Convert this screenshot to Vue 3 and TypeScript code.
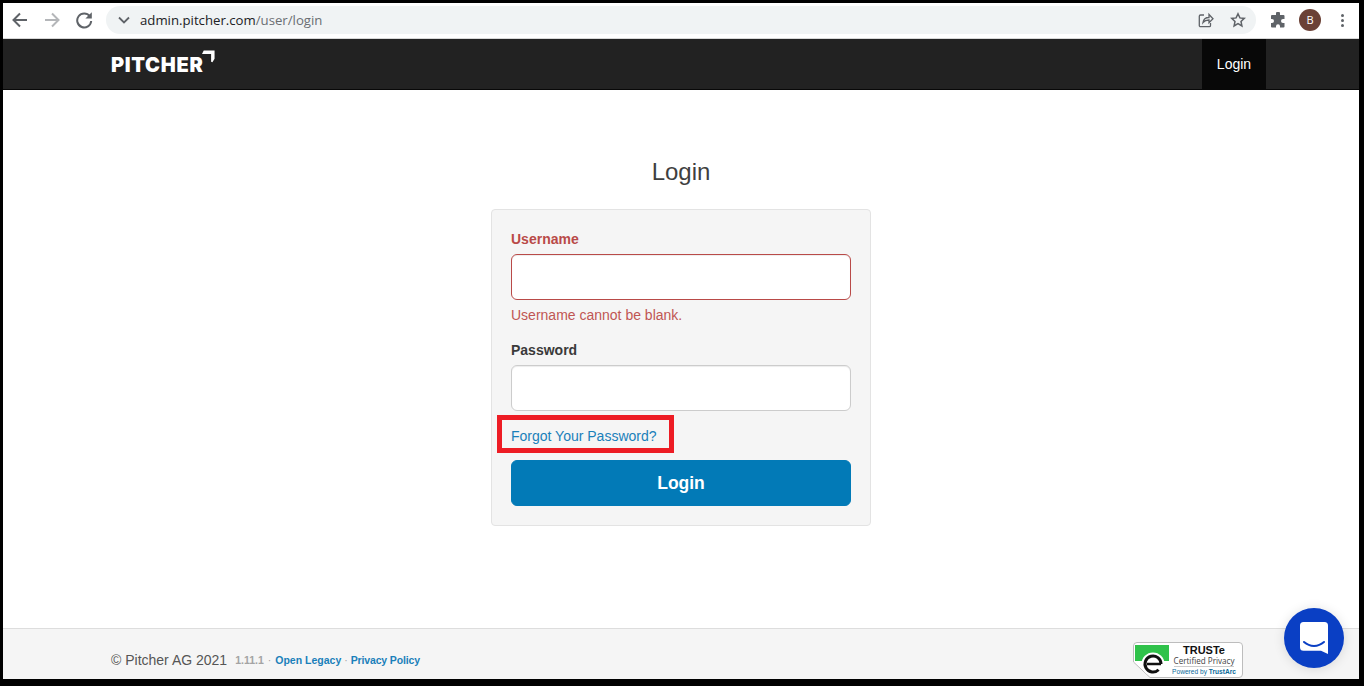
<script setup lang="ts">
const username = ''
const password = ''
</script>

<template>
  <div class="frame">
    <div class="window">
      <header class="toolbar">
        <button class="tool">
          <svg width="18" height="18" viewBox="0 0 18 18" fill="none" stroke="#5f6368" stroke-width="2"><path d="M16 9H3M9 2.500 2.500 9 9 15.500" /></svg>
        </button>
        <button class="tool">
          <svg width="18" height="18" viewBox="0 0 18 18" fill="none" stroke="#b4b6b9" stroke-width="2"><path d="M2 9h13M9 2.500 15.500 9 9 15.500" /></svg>
        </button>
        <button class="tool">
          <svg width="18" height="18" viewBox="0 0 18 18" fill="none"><path d="M14.800 5.200A7 7 0 1 0 16.200 10" stroke="#5f6368" stroke-width="2" /><path d="M16.800 1.200v6.400h-6.400z" fill="#5f6368" /></svg>
        </button>
        <div class="omnibox">
          <svg class="chev" width="12" height="8" viewBox="0 0 12 8" fill="none" stroke="#5f6368" stroke-width="1.800"><path d="M1 1.500 6 6.500l5-5" /></svg>
          <span class="url">admin.pitcher.com<span class="url-path">/user/login</span></span>
          <svg class="omni-icon share" width="16" height="16" viewBox="0 0 16 16" fill="none" stroke="#5f6368" stroke-width="1.300"><path d="M6 3H2.500A1.200 1.200 0 0 0 1.300 4.200v9.300a1.200 1.200 0 0 0 1.200 1.200h8.800a1.200 1.200 0 0 0 1.200-1.200V11" /><path d="M5 10.500c.5-3.500 3-5 6-5V2.500l4 4.300-4 4V8c-2.500 0-4.500.7-6 2.500z" /></svg>
          <svg class="omni-icon star" width="16" height="16" viewBox="0 0 16 16" fill="none" stroke="#5f6368" stroke-width="1.500"><path d="M8 1.800l1.900 4.100 4.400.5-3.300 3 .9 4.500L8 11.600l-3.900 2.300.9-4.500-3.300-3 4.400-.5z" /></svg>
        </div>
        <svg class="puzzle" width="16" height="16" viewBox="0 0 16 16" fill="#5f6368"><path d="M6 1.500a2 2 0 0 1 4 0V3h3.500a1 1 0 0 1 1 1v3H13a2 2 0 0 0 0 4h1.500v3.500a1 1 0 0 1-1 1H10v-1.300a2 2 0 0 0-4 0v1.300H2a1 1 0 0 1-1-1V11h1a2 2 0 0 0 0-4H1V4a1 1 0 0 1 1-1h4z" /></svg>
        <div class="avatar">B</div>
        <div class="dots"><i></i><i></i><i></i></div>
      </header>

      <nav class="navbar">
        <a class="brand">
          <span class="brand-text">PITCHER</span>
          <svg class="brand-mark" width="13" height="13" viewBox="0 0 15 14" fill="#fff"><path d="M2 0h12.500v9.500L12 13.500l-1.500-.5V4H0z" /></svg>
        </a>
        <a class="nav-login">Login</a>
      </nav>

      <main class="main">
        <h1 class="title">Login</h1>
        <form class="panel" @submit.prevent>
          <label class="label label-error">Username</label>
          <input class="field field-error" type="text" :value="username" />
          <p class="error">Username cannot be blank.</p>
          <label class="label label-password">Password</label>
          <input class="field" type="password" :value="password" />
          <div class="forgot-row">
            <a class="forgot">Forgot Your Password?</a>
            <span class="highlight"></span>
          </div>
          <button class="submit" type="submit">Login</button>
        </form>
      </main>

      <footer class="footer">
        <span class="copyright">© Pitcher AG 2021</span>
        <span class="meta">1.11.1<span class="sep">·</span><a>Open Legacy</a><span class="sep sep-tight">·</span><a class="tight">Privacy Policy</a></span>
        <div class="truste">
          <svg class="truste-shape" width="110" height="36" viewBox="0 0 110 36"><path d="M4 .5H106a3.500 3.500 0 0 1 3.500 3.500V32a3.500 3.500 0 0 1-3.500 3.500H17L.5 20V4A3.500 3.500 0 0 1 4 .5z" fill="#fff" stroke="#bdbdbd" /></svg>
          <div class="truste-mark">
            <span class="truste-green"></span>
            <svg class="truste-e" width="24" height="24" viewBox="0 0 24 24" fill="none"><circle cx="12" cy="12" r="11.500" fill="#fff" /><path d="M20 12H6" stroke="#111" stroke-width="2.500" /><path d="M20 12a8 8 0 1 0-2.400 5.700" stroke="#111" stroke-width="3" /></svg>
          </div>
          <div class="truste-copy">
            <b>TRUSTe</b>
            <span class="truste-cert">Certified Privacy</span>
            <span class="truste-power">Powered by <b>TrustArc</b></span>
          </div>
        </div>
      </footer>

      <button class="chat" aria-label="Chat">
        <svg width="28" height="32" viewBox="0 0 28 32"><path d="M3.500 0h21A3.500 3.500 0 0 1 28 3.500V32l-7-3.300H3.500A3.500 3.500 0 0 1 0 25.200V3.500A3.500 3.500 0 0 1 3.500 0z" fill="#fff" /><path d="M4 20c6 5.200 14 5.200 20 0" fill="none" stroke="#0a3fc4" stroke-width="2" stroke-linecap="round" /></svg>
      </button>
    </div>
  </div>
</template>

<style scoped>
.frame {
  width: 1364px;
  height: 686px;
  box-sizing: border-box;
  padding: 3px 5px 7px 3px;
  background: #000;
  font-family: "Liberation Sans", Arial, sans-serif;
  color: #333;
  overflow: hidden;
}
.window {
  position: relative;
  height: 100%;
  display: flex;
  flex-direction: column;
  background: #fff;
}
.toolbar {
  height: 34px;
  flex: none;
  display: flex;
  align-items: center;
  padding-left: 1px;
  padding-bottom: 1px;
  background: #fff;
  border-bottom: 1px solid #d8d8d8;
}
.tool {
  width: 32px;
  height: 32px;
  padding: 0;
  border: 0;
  background: none;
  display: flex;
  align-items: center;
  justify-content: center;
}
.omnibox {
  width: 1150px;
  height: 28px;
  margin-left: 6px;
  border-radius: 14px;
  background: #f0f3f4;
  display: flex;
  align-items: center;
  box-sizing: border-box;
  padding-left: 12px;
}
.url {
  margin-left: 10px;
  font-family: "Open Sans", sans-serif;
  font-size: 13.200px;
  color: #202124;
  white-space: nowrap;
}
.url-path { color: #6a6e72; }
.omni-icon.share { margin-left: auto; }
.omni-icon.star { margin-left: 16px; margin-right: 10px; }
.puzzle { margin-left: 14px; }
.avatar {
  width: 22px;
  height: 22px;
  margin-left: 13px;
  border-radius: 50%;
  background: #6b4136;
  color: #fff;
  font-family: "Open Sans", sans-serif;
  font-size: 11px;
  line-height: 22px;
  text-align: center;
}
.dots {
  margin-left: 20px;
  display: flex;
  flex-direction: column;
  gap: 2px;
}
.dots i {
  width: 3px;
  height: 3px;
  border-radius: 50%;
  background: #5f6368;
}
.navbar {
  height: 50px;
  flex: none;
  display: flex;
  align-items: stretch;
  padding-left: 108px;
  padding-right: 93px;
  background: #222;
  border-bottom: 1px solid #080808;
}
.brand {
  display: flex;
  align-items: flex-start;
  position: relative;
  width: 104px;
}
.brand-text {
  margin-top: 12px;
  font-family: Inter, sans-serif;
  font-weight: 900;
  font-size: 20px;
  line-height: 28px;
  letter-spacing: .7px;
  color: #fff;
}
.brand-mark {
  position: absolute;
  left: 91px;
  top: 11px;
}
.nav-login {
  margin-left: auto;
  width: 64px;
  background: #080808;
  color: #fff;
  font-size: 14px;
  line-height: 50px;
  text-align: center;
}
.main {
  flex: 1;
  display: flex;
  flex-direction: column;
  align-items: center;
  min-height: 0;
}
.title {
  margin: 66px 0 22px;
  font-size: 24px;
  font-weight: 400;
  line-height: 31px;
  color: #3f3f3f;
}
.panel {
  width: 380px;
  height: 317px;
  box-sizing: border-box;
  padding: 19px;
  display: flex;
  flex-direction: column;
  background: #f5f5f5;
  border: 1px solid #e3e3e3;
  border-radius: 4px;
}
.label {
  font-size: 14px;
  font-weight: 700;
  line-height: 20px;
  margin-bottom: 5px;
  color: #3a3a3a;
}
.label-error { color: #b94a48; }
.label-password { margin-top: 15px; }
.field {
  height: 46px;
  flex: none;
  box-sizing: border-box;
  width: 100%;
  border: 1px solid #ccc;
  border-radius: 6px;
  background: #fff;
  outline: none;
  box-shadow: inset 0 1px 1px rgba(0, 0, 0, .075);
}
.field-error { border-color: #b94a48; }
.error {
  margin: 5px 0 0;
  font-size: 14px;
  line-height: 20px;
  color: #c05553;
}
.forgot-row {
  position: relative;
  margin-top: 15px;
  height: 20px;
}
.forgot {
  font-size: 14px;
  line-height: 20px;
  color: #1a80ba;
}
.highlight {
  position: absolute;
  left: -14px;
  top: -11px;
  width: 177px;
  height: 38px;
  box-sizing: border-box;
  border: 5px solid #ed1c24;
}
.submit {
  margin-top: 14px;
  height: 46px;
  flex: none;
  padding: 0;
  border: 1px solid #027ab7;
  border-radius: 6px;
  background: #027ab7;
  color: #fff;
  font-family: inherit;
  font-size: 17.500px;
  font-weight: 700;
}
.footer {
  height: 51px;
  flex: none;
  box-sizing: border-box;
  position: relative;
  display: flex;
  align-items: flex-start;
  padding: 22px 116px 0 108px;
  background: #f5f5f5;
  border-top: 1px solid #ddd;
}
.copyright {
  font-size: 14px;
  line-height: 18px;
  color: #555;
}
.meta {
  margin-left: 8px;
  margin-top: 2px;
  font-size: 10.500px;
  font-weight: 700;
  line-height: 15px;
  color: #a3a3a3;
  white-space: pre;
}
.meta a { color: #1a80ba; }
.meta a.tight { letter-spacing: -.15px; }
.sep {
  margin: 0 4px;
  font-weight: 400;
}
.sep-tight { margin: 0 3px; }
.truste {
  position: relative;
  margin-left: auto;
  margin-top: -9px;
  width: 110px;
  height: 36px;
  display: flex;
}
.truste-shape {
  position: absolute;
  left: 0;
  top: 0;
}
.truste-mark {
  position: relative;
  width: 39px;
  flex: none;
}
.truste-green {
  position: absolute;
  left: 2px;
  top: 3px;
  width: 34px;
  height: 16px;
  background: #2fc24a;
}
.truste-e {
  position: absolute;
  left: 8px;
  top: 10px;
}
.truste-copy {
  position: relative;
  width: 64px;
  padding-top: 2px;
  display: flex;
  flex-direction: column;
  align-items: center;
}
.truste-copy > b {
  font-size: 11px;
  line-height: 12px;
  color: #111;
}
.truste-cert {
  margin-top: -1px;
  font-family: "Open Sans", sans-serif;
  font-size: 8.100px;
  line-height: 11px;
  color: #444;
  white-space: nowrap;
  border-bottom: 1px solid #ccc;
}
.truste-power {
  font-size: 6.600px;
  line-height: 10px;
  color: #0b6a9a;
  white-space: nowrap;
}
.chat {
  position: absolute;
  left: 1281px;
  top: 605px;
  width: 60px;
  height: 60px;
  padding: 0;
  border: 0;
  border-radius: 50%;
  background: #0a3fc4;
  display: flex;
  align-items: center;
  justify-content: center;
  box-shadow: 0 1px 12px rgba(0, 0, 0, .12);
}
</style>
